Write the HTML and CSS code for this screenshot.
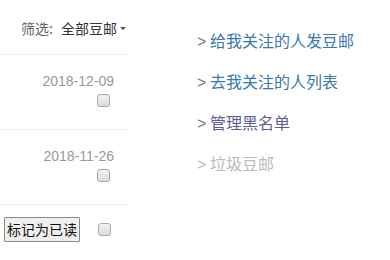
FILE: index.html
```html
<!DOCTYPE html>
<html lang="zh-CN">
<head>
<meta charset="utf-8">
<link rel="stylesheet" href="styles.css">
</head>
<body>
<div class="page">
  <div class="main">
    <div class="filter"><span class="filter-label">筛选:</span><span class="filter-value">全部豆邮</span><span class="caret"></span></div>
    <div class="row">
      <span class="date">2018-12-09</span>
      <input type="checkbox" class="check">
    </div>
    <div class="row">
      <span class="date">2018-11-26</span>
      <input type="checkbox" class="check">
    </div>
    <div class="actions">
      <button class="btn">标记为已读</button>
      <input type="checkbox" class="check">
    </div>
  </div>
  <ul class="side">
    <li><span class="gt">&gt;</span> <a class="link" href="#">给我关注的人发豆邮</a></li>
    <li><span class="gt">&gt;</span> <a class="link" href="#">去我关注的人列表</a></li>
    <li><span class="gt">&gt;</span> <a class="link visited" href="#">管理黑名单</a></li>
    <li class="muted"><span class="gt">&gt;</span> <a class="link" href="#">垃圾豆邮</a></li>
  </ul>
</div>
</body>
</html>
```
FILE: styles.css
```css
html, body {
  margin: 0;
  padding: 0;
  background: #fff;
}
body {
  font-family: "Liberation Sans", "Noto Sans CJK SC", sans-serif;
  color: #333;
}
.page {
  display: flex;
  align-items: flex-start;
}
.main {
  width: 127px;
  flex: none;
}
.filter {
  height: 54px;
  display: flex;
  align-items: center;
  justify-content: flex-end;
  font-family: "Noto Sans CJK SC", sans-serif;
  font-size: 14px;
  padding-top: 2px;
  box-sizing: border-box;
}
.filter-label {
  color: #666;
  margin-right: 8px;
}
.filter-value {
  color: #333;
}
.caret {
  width: 0;
  height: 0;
  border-left: 3px solid transparent;
  border-right: 3px solid transparent;
  border-top: 3px solid #555;
  margin-left: 3px;
  margin-right: 1px;
}
.row {
  border-top: 1px solid #ececec;
  height: 75px;
  box-sizing: border-box;
  display: flex;
  flex-direction: column;
  align-items: flex-end;
  padding-top: 17px;
}
.date {
  font-size: 14px;
  color: #999;
  line-height: 18px;
  margin-right: 13px;
}
.check {
  appearance: none;
  -webkit-appearance: none;
  width: 13px;
  height: 13px;
  margin: 0;
  border: 1px solid #a8a8a8;
  border-radius: 3px;
  background: linear-gradient(#f2f2f2, #dcdcdc);
  box-sizing: border-box;
}
.row .check {
  margin-top: 4px;
  margin-right: 17px;
}
.actions {
  border-top: 1px solid #ececec;
  display: flex;
  align-items: center;
  padding-top: 12px;
  padding-left: 4px;
}
.btn {
  font-family: "Noto Sans CJK SC", sans-serif;
  font-size: 14px;
  line-height: 19px;
  color: #111;
  background: #efefef;
  border: 1px solid #8a8a8a;
  border-radius: 1px;
  padding: 2px 2px;
  height: 25px;
  white-space: nowrap;
  margin: 0;
  box-sizing: border-box;
}
.actions .check {
  margin-left: 18px;
}
.side {
  list-style: none;
  margin: 20px 0 0 70px;
  padding: 0;
  font-family: "Noto Sans CJK SC", sans-serif;
  font-size: 16px;
}
.side li {
  height: 41px;
  line-height: 41px;
  white-space: nowrap;
}
.gt {
  color: #777;
  font-family: "Liberation Sans", sans-serif;
}
.link {
  color: #3a78b0;
  text-decoration: none;
}
.link.visited {
  color: #5d5d95;
}
.muted .gt,
.muted .link {
  color: #bbb;
}
```
